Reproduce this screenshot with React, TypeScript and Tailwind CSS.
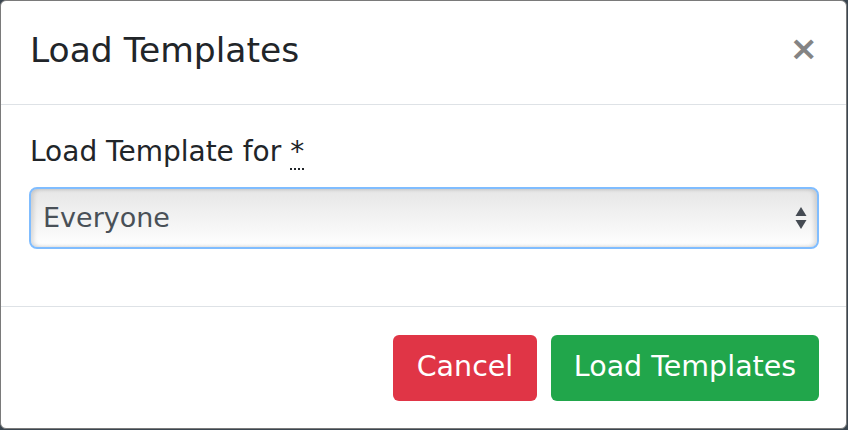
import React from 'react'

const font = { fontFamily: '"DejaVu Sans", "Noto Sans", sans-serif' }

function SelectArrows() {
  return (
    <svg width="12" height="26" viewBox="0 0 12 26" className="absolute right-[12px] top-1/2 -translate-y-1/2">
      <path d="M6 2 L11.5 11 L0.5 11 Z" fill="#454b53" />
      <path d="M0.5 15 L11.5 15 L6 24 Z" fill="#454b53" />
    </svg>
  )
}

export default function App() {
  return (
    <div className="w-[848px] h-[430px] bg-[#3b4650] overflow-hidden" style={font}>
      <div className="w-[847px] h-[429px] bg-white rounded-[6px] border border-[#7a7a7a] flex flex-col">
        {/* Header */}
        <div className="h-[104px] flex items-center justify-between pl-[29px] pr-[28px] border-b border-[#dee2e6]">
          <h5 className="text-[34.5px] leading-none text-[#212529] -mt-[4px]">Load Templates</h5>
          <button className="text-[34px] leading-none font-bold text-[#848484] -mt-[10px]">×</button>
        </div>

        {/* Body */}
        <div className="h-[202px] pl-[28px] pr-[27px] pt-[30px] border-b border-[#dee2e6]">
          <label className="block text-[28px] leading-[33px] text-[#212529] pl-[1px]">
            Load Template for{' '}
            <abbr className="no-underline border-b-2 border-dotted border-[#212529]" title="required">*</abbr>
          </label>
          <div className="relative mt-[19px]">
            <div className="h-[62px] rounded-[8px] border-2 border-[#80bdff] bg-gradient-to-b from-[#e6e6e6] to-[#ffffff] shadow-[inset_3px_0_4px_rgba(0,0,0,0.12),inset_-3px_0_4px_rgba(0,0,0,0.12)] flex items-center pl-[12px] text-[27px] text-[#495057]">
              Everyone
            </div>
            <SelectArrows />
          </div>
        </div>

        {/* Footer */}
        <div className="flex-1 flex items-center justify-end gap-[14px] pr-[27px]">
          <button className="h-[66px] w-[144px] rounded-[6px] bg-[#e03546] text-white text-[28.5px]">Cancel</button>
          <button className="h-[66px] w-[268px] rounded-[6px] bg-[#21a64b] text-white text-[28.5px]">Load Templates</button>
        </div>
      </div>
    </div>
  )
}
